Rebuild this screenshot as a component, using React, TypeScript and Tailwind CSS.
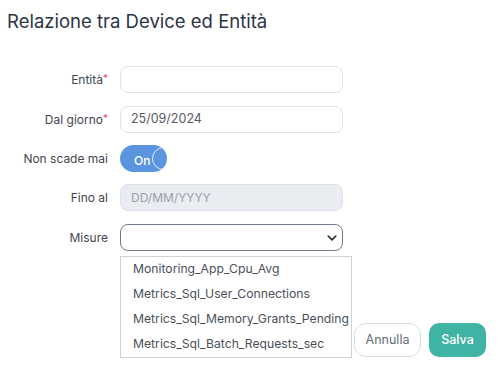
import React from 'react';

const options = [
  'Monitoring_App_Cpu_Avg',
  'Metrics_Sql_User_Connections',
  'Metrics_Sql_Memory_Grants_Pending',
  'Metrics_Sql_Batch_Requests_sec',
];

const Label = ({ text, required }: { text: string; required?: boolean }) => (
  <div className="w-[110px] text-right pr-[2px] text-[12px] text-[#3f4650]">
    {text}
    {required && <span className="text-[#f0477a] text-[10px] align-top">*</span>}
  </div>
);

const App = () => {
  return (
    <div className="w-[499px] h-[376px] bg-white relative font-['Inter',sans-serif]">
      <h1 className="pt-[9px] pl-[7px] text-[18.5px] text-[#2b3445] font-normal leading-[24px]">
        Relazione tra Device ed Entità
      </h1>

      <div className="mt-[33px] flex flex-col">
        <div className="flex items-center h-[27px]">
          <Label text="Entità" required />
          <div className="ml-[10px] w-[223px] h-[27px] rounded-[8px] border border-[#dde2e8] bg-white" />
        </div>

        <div className="flex items-center h-[27px] mt-[13px]">
          <Label text="Dal giorno" required />
          <div className="ml-[10px] w-[223px] h-[27px] rounded-[8px] border border-[#dde2e8] bg-white flex items-center px-[10px] text-[12.5px] text-[#555b63]">
            25/09/2024
          </div>
        </div>

        <div className="flex items-center h-[27px] mt-[12px]">
          <Label text="Non scade mai" />
          <div className="ml-[10px] w-[47px] h-[27px] rounded-full bg-[#5b95e0] relative flex items-center overflow-hidden">
            <span className="ml-[14px] mt-[5px] text-[12px] text-white font-medium leading-none">On</span>
            <div className="absolute right-[-10px] top-[2px] w-[25px] h-[23px] rounded-full border border-[#e4ecf8]" />
          </div>
        </div>

        <div className="flex items-center h-[27px] mt-[12px]">
          <Label text="Fino al" />
          <div className="ml-[10px] w-[223px] h-[27px] rounded-[8px] border border-[#dde2e8] bg-[#e9edf2] flex items-center px-[10px] text-[12px] text-[#9aa0a8]">
            DD/MM/YYYY
          </div>
        </div>

        <div className="flex items-center h-[27px] mt-[13px]">
          <Label text="Misure" />
          <div className="ml-[10px] w-[223px] h-[27px] rounded-[8px] border border-[#6f7a8a] bg-white flex items-center justify-end pr-[5px]">
            <svg width="10" height="10" viewBox="0 0 16 16" fill="none">
              <path d="M2 5l6 6 6-6" stroke="#333" strokeWidth="2.6" strokeLinecap="round" strokeLinejoin="round" />
            </svg>
          </div>
        </div>

        <div className="flex">
          <div className="ml-[120px] mt-[5px] w-[232px] border border-[#cfd3d8] bg-white">
            {options.map((o) => (
              <div key={o} className="h-[25px] flex items-center pl-[12px] text-[12.2px] text-[#4a5059]">
                {o}
              </div>
            ))}
          </div>
          <div className="mt-[72px] ml-[2px] flex gap-[8px]">
            <button className="w-[67px] h-[34px] rounded-[12px] border border-[#d6dbe1] text-[12.5px] text-[#666c74] bg-white">
              Annulla
            </button>
            <button className="w-[57px] h-[34px] rounded-[10px] bg-[#3fb4a5] text-[12.5px] text-white font-medium">
              Salva
            </button>
          </div>
        </div>
      </div>
    </div>
  );
};

export default App;
